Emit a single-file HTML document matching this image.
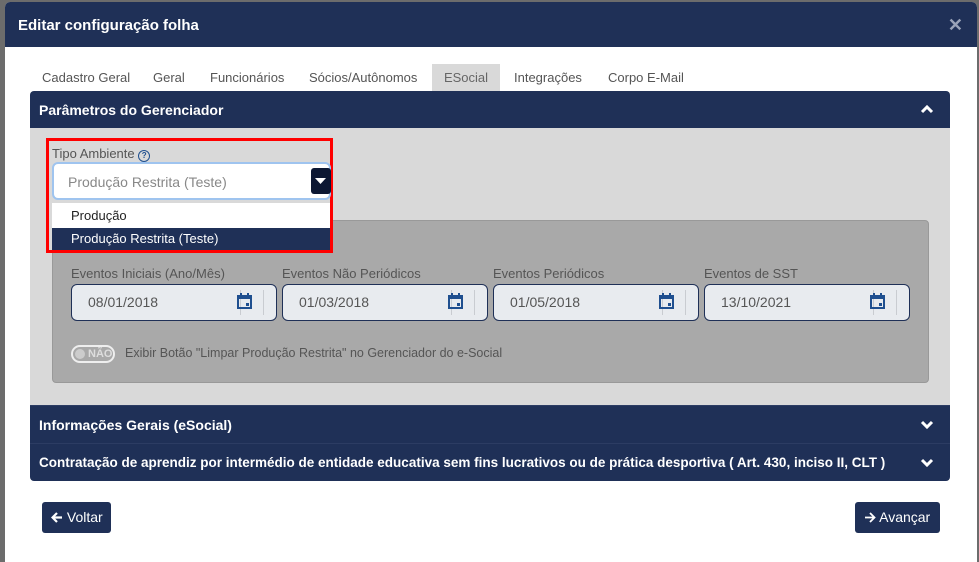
<!DOCTYPE html>
<html><head><meta charset="utf-8"><style>
*{box-sizing:border-box;margin:0;padding:0}
body{width:979px;height:553px;background:#6c6c6c;font-family:"Liberation Sans",sans-serif;position:relative;overflow:hidden}
.modal{position:absolute;left:5px;top:2px;width:972px;height:560px;background:#fff;border-radius:5px 5px 0 0;overflow:hidden}
.hdr{height:45px;background:#1f3057;color:#fff;font-weight:bold;font-size:15px;padding:15px 0 0 13px;position:relative}
.x{position:absolute;right:14px;top:13px;color:#9aa3b8;font-size:18px;font-weight:bold}
.tabs{position:absolute;top:62px;left:0;font-size:13px;color:#555}
.tab{position:absolute;top:0;height:27px;line-height:27px;white-space:nowrap}
.panel{position:absolute;left:25px;top:89px;width:920px}
.ph{height:37px;background:#1f3057;color:#fff;font-weight:bold;font-size:14px;padding:11px 9px;position:relative;border-radius:4px 4px 0 0}
.pb{height:277px;background:#d9d9d9;position:relative}
.inner{position:absolute;left:22px;top:92px;width:877px;height:163px;background:#a9a9a9;border:1px solid #999;border-radius:4px}
.lbl{position:absolute;font-size:13px;color:#555;white-space:nowrap}
.inp{position:absolute;top:63px;width:206px;height:37px;background:#e8ebef;border:1px solid #1f3057;border-radius:6px;font-size:14px;color:#555;padding:9px 0 0 16px}
.cal{position:absolute;right:24px;top:8px}
.sep{position:absolute;top:5px;bottom:5px;width:1px;background:#c9ccd1}
.acc{height:38px;background:#1f3057;color:#fff;font-weight:bold;font-size:14px;padding:11px 9px;position:relative;border-top:1px solid #2c3c63;white-space:nowrap}
.chev{position:absolute;right:16px;top:14px}
.btn{position:absolute;top:502px;height:31px;background:#1f3057;color:#fff;font-size:14px;border-radius:3px;padding:7px 0 0 9px;white-space:nowrap}
</style></head><body>
<div class="modal">
<div class="hdr">Editar configuração folha<span class="x">✕</span></div>
<div class="tabs">
<div class="tab" style="left:37px">Cadastro Geral</div>
<div class="tab" style="left:148px">Geral</div>
<div class="tab" style="left:205px">Funcionários</div>
<div class="tab" style="left:304px">Sócios/Autônomos</div>
<div class="tab" style="left:427px;width:68px;background:#d9d9d9;text-align:center;color:#666">ESocial</div>
<div class="tab" style="left:509px">Integrações</div>
<div class="tab" style="left:603px">Corpo E-Mail</div>
</div>
<div class="panel">
<div class="ph">Parâmetros do Gerenciador
<svg class="chev" style="top:14px" width="14" height="9" viewBox="0 0 14 9"><path d="M2 7L7 2L12 7" stroke="#fff" stroke-width="3" fill="none"/></svg></div>
<div class="pb">
<div class="inner">
<div class="lbl" style="left:18px;top:45px">Eventos Iniciais (Ano/Mês)</div>
<div class="lbl" style="left:229px;top:45px">Eventos Não Periódicos</div>
<div class="lbl" style="left:440px;top:45px">Eventos Periódicos</div>
<div class="lbl" style="left:651px;top:45px">Eventos de SST</div>
<div class="inp" style="left:18px">08/01/2018<div class="sep" style="right:35px"></div><div class="sep" style="right:12px"></div><svg class="cal" width="15" height="17" viewBox="0 0 15 17"><rect x="1" y="3" width="13" height="12" fill="none" stroke="#1f4f8f" stroke-width="2"/><rect x="1" y="3" width="13" height="3" fill="#1f4f8f"/><rect x="3" y="0" width="2" height="4" fill="#1f4f8f"/><rect x="10" y="0" width="2" height="4" fill="#1f4f8f"/><rect x="9" y="10" width="3" height="3" fill="#1f4f8f"/></svg></div>
<div class="inp" style="left:229px">01/03/2018<div class="sep" style="right:35px"></div><div class="sep" style="right:12px"></div><svg class="cal" width="15" height="17" viewBox="0 0 15 17"><rect x="1" y="3" width="13" height="12" fill="none" stroke="#1f4f8f" stroke-width="2"/><rect x="1" y="3" width="13" height="3" fill="#1f4f8f"/><rect x="3" y="0" width="2" height="4" fill="#1f4f8f"/><rect x="10" y="0" width="2" height="4" fill="#1f4f8f"/><rect x="9" y="10" width="3" height="3" fill="#1f4f8f"/></svg></div>
<div class="inp" style="left:440px">01/05/2018<div class="sep" style="right:35px"></div><div class="sep" style="right:12px"></div><svg class="cal" width="15" height="17" viewBox="0 0 15 17"><rect x="1" y="3" width="13" height="12" fill="none" stroke="#1f4f8f" stroke-width="2"/><rect x="1" y="3" width="13" height="3" fill="#1f4f8f"/><rect x="3" y="0" width="2" height="4" fill="#1f4f8f"/><rect x="10" y="0" width="2" height="4" fill="#1f4f8f"/><rect x="9" y="10" width="3" height="3" fill="#1f4f8f"/></svg></div>
<div class="inp" style="left:651px">13/10/2021<div class="sep" style="right:35px"></div><div class="sep" style="right:12px"></div><svg class="cal" width="15" height="17" viewBox="0 0 15 17"><rect x="1" y="3" width="13" height="12" fill="none" stroke="#1f4f8f" stroke-width="2"/><rect x="1" y="3" width="13" height="3" fill="#1f4f8f"/><rect x="3" y="0" width="2" height="4" fill="#1f4f8f"/><rect x="10" y="0" width="2" height="4" fill="#1f4f8f"/><rect x="9" y="10" width="3" height="3" fill="#1f4f8f"/></svg></div>
<div style="position:absolute;left:18px;top:124px;width:44px;height:18px;border:2px solid #eee;border-radius:9px;background:#a9a9a9"><div style="position:absolute;left:2px;top:2px;width:10px;height:10px;border-radius:50%;background:#ccc"></div><span style="position:absolute;left:15px;top:1px;font-size:11px;font-weight:bold;color:#ddd">NÃO</span></div>
<div class="lbl" style="left:72px;top:125px;font-size:12.5px">Exibir Botão "Limpar Produção Restrita" no Gerenciador do e-Social</div>
</div>
<!-- dropdown -->
<div style="position:absolute;left:16px;top:10px;width:287px;height:115px;border:3px solid #f00"></div>
<div class="lbl" style="left:22px;top:18px">Tipo Ambiente <span style="display:inline-block;width:12px;height:12px;border:1.5px solid #1f4f8f;border-radius:50%;font-size:8px;text-align:center;line-height:9px;color:#1f4f8f;font-weight:bold">?</span></div>
<div style="position:absolute;left:22px;top:34px;width:279px;height:38px;background:#fff;border:2px solid #9fc4ef;border-radius:6px;font-size:14px;color:#888;padding:10px 0 0 14px">Produção Restrita (Teste)<div style="position:absolute;right:-2px;top:4px;width:20px;height:26px;background:#0c1733;border-radius:3px"><svg style="position:absolute;left:4px;top:10px" width="11" height="6"><path d="M0 0H11L5.5 6Z" fill="#fff"/></svg></div></div>
<div style="position:absolute;left:22px;top:75px;width:278px;height:25px;background:#fff;font-size:13px;color:#222;padding:5px 0 0 19px">Produção</div>
<div style="position:absolute;left:22px;top:100px;width:278px;height:22px;background:#1f3057;font-size:13px;color:#fff;padding:3px 0 0 19px">Produção Restrita (Teste)</div>
</div>
<div class="acc">Informações Gerais (eSocial)<svg class="chev" width="14" height="9" viewBox="0 0 14 9"><path d="M2 2L7 7L12 2" stroke="#fff" stroke-width="3" fill="none"/></svg></div>
<div class="acc" style="border-radius:0 0 4px 4px;font-size:13.5px">Contratação de aprendiz por intermédio de entidade educativa sem fins lucrativos ou de prática desportiva ( Art. 430, inciso II, CLT )<svg class="chev" width="14" height="9" viewBox="0 0 14 9"><path d="M2 2L7 7L12 2" stroke="#fff" stroke-width="3" fill="none"/></svg></div>
</div>
</div>
<div class="btn" style="left:42px;width:69px"><svg width="12" height="11" viewBox="0 0 12 11" style="vertical-align:-1px"><path d="M11 5.5H2M6 1L1.5 5.5L6 10" stroke="#fff" stroke-width="2.2" fill="none"/></svg> Voltar</div>
<div class="btn" style="left:855px;width:85px"><svg width="12" height="11" viewBox="0 0 12 11" style="vertical-align:-1px"><path d="M1 5.5H10M6 1L10.5 5.5L6 10" stroke="#fff" stroke-width="1.8" fill="none"/></svg> Avançar</div>
</body></html>
